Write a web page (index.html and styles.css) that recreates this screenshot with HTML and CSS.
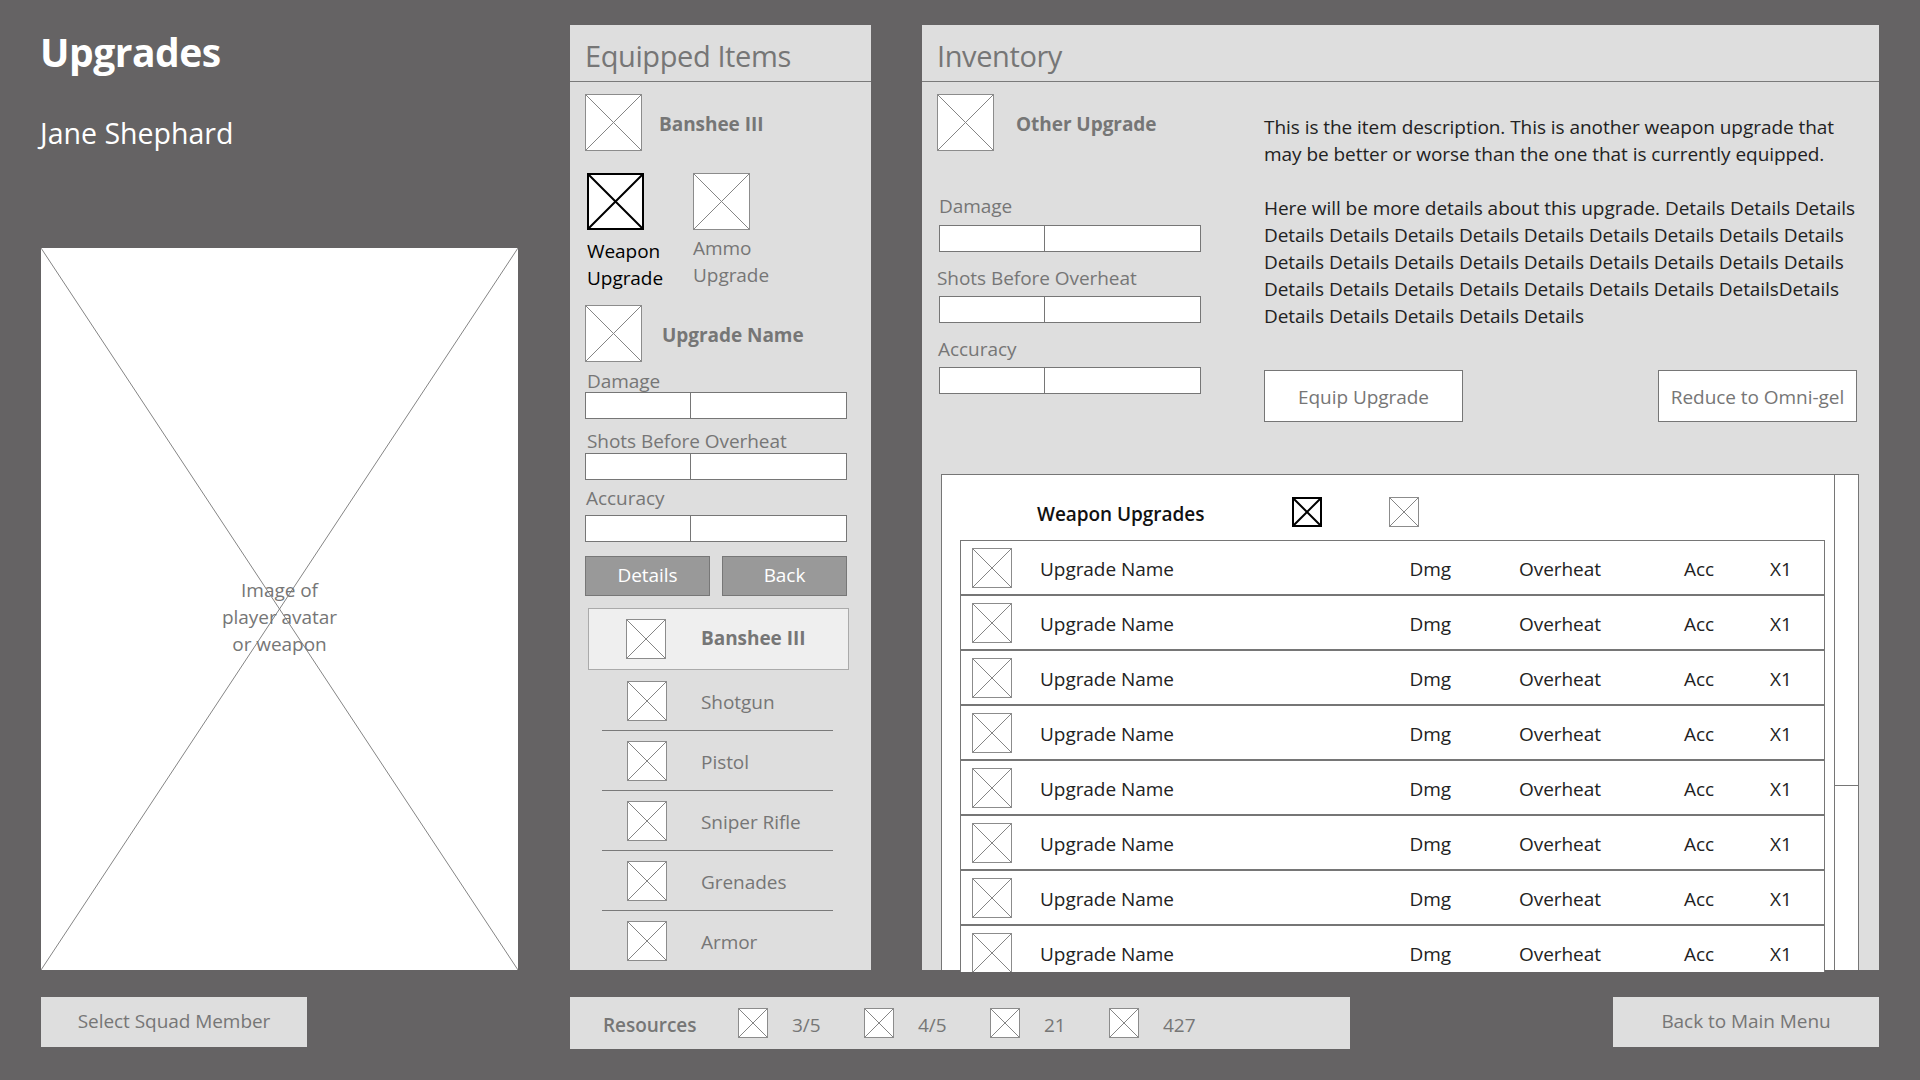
FILE: index.html
```html
<!DOCTYPE html>
<html lang="en">
<head>
    <meta charset="UTF-8">
    <title>Upgrades</title>
    <link rel="stylesheet" href="styles.css">
</head>
<body>

<svg class="defs" width="0" height="0">
    <symbol id="cross" viewBox="0 0 100 100" preserveAspectRatio="none">
        <path d="M0 0L100 100M100 0L0 100"/>
    </symbol>
</svg>

<div class="page">
    <div class="main">
        <section class="player">
            <h1 class="title">Upgrades</h1>
            <p class="player-name">Jane Shephard</p>
            <div class="avatar">
                <svg class="avatar-cross"><use href="#cross"/></svg>
                <p class="avatar-text">Image of<br>player avatar<br>or weapon</p>
            </div>
        </section>

        <section class="panel equipped">
            <h2 class="panel-title">Equipped Items</h2>
            <div class="item-head head-first">
                <svg class="ph ph-large"><use href="#cross"/></svg>
                <span class="item-name name-banshee">Banshee III</span>
            </div>
            <div class="tabs">
                <div class="tab tab-active">
                    <svg class="ph ph-large"><use href="#cross"/></svg>
                    <p>Weapon<br>Upgrade</p>
                </div>
                <div class="tab">
                    <svg class="ph ph-large"><use href="#cross"/></svg>
                    <p>Ammo<br>Upgrade</p>
                </div>
            </div>
            <div class="item-head head-second">
                <svg class="ph ph-large"><use href="#cross"/></svg>
                <span class="item-name name-upgrade">Upgrade Name</span>
            </div>
            <div class="stat stat-damage">
                <div class="stat-label">Damage</div>
                <div class="stat-bar"><span></span></div>
            </div>
            <div class="stat stat-shots">
                <div class="stat-label">Shots Before Overheat</div>
                <div class="stat-bar"><span></span></div>
            </div>
            <div class="stat stat-accuracy">
                <div class="stat-label">Accuracy</div>
                <div class="stat-bar"><span></span></div>
            </div>
            <div class="actions">
                <button class="btn-dark">Details</button>
                <button class="btn-dark">Back</button>
            </div>
            <div class="selected-weapon">
                <svg class="ph ph-row"><use href="#cross"/></svg>
                <strong>Banshee III</strong>
            </div>
            <ul class="weapons">
                <li><svg class="ph ph-row"><use href="#cross"/></svg><span>Shotgun</span></li>
                <li><svg class="ph ph-row"><use href="#cross"/></svg><span>Pistol</span></li>
                <li><svg class="ph ph-row"><use href="#cross"/></svg><span>Sniper Rifle</span></li>
                <li><svg class="ph ph-row"><use href="#cross"/></svg><span>Grenades</span></li>
                <li><svg class="ph ph-row"><use href="#cross"/></svg><span>Armor</span></li>
            </ul>
        </section>

        <section class="panel inventory">
            <h2 class="panel-title">Inventory</h2>
            <div class="inventory-top">
                <div class="inventory-stats">
                    <div class="item-head head-first">
                        <svg class="ph ph-large"><use href="#cross"/></svg>
                        <span class="item-name name-other">Other Upgrade</span>
                    </div>
                    <div class="stat stat-inv stat-inv-first">
                        <div class="stat-label">Damage</div>
                        <div class="stat-bar"><span></span></div>
                    </div>
                    <div class="stat stat-inv stat-shots-inv">
                        <div class="stat-label">Shots Before Overheat</div>
                        <div class="stat-bar"><span></span></div>
                    </div>
                    <div class="stat stat-inv stat-accuracy-inv">
                        <div class="stat-label">Accuracy</div>
                        <div class="stat-bar"><span></span></div>
                    </div>
                </div>
                <div class="description">
                    <p>This is the item description. This is another weapon upgrade that<br>may be better or worse than the one that is currently equipped.</p>
                    <p>Here will be more details about this upgrade. Details Details Details<br>Details Details Details Details Details Details Details Details Details<br>Details Details Details Details Details Details Details Details Details<br>Details Details Details Details Details Details Details DetailsDetails<br>Details Details Details Details Details</p>
                    <div class="description-actions">
                        <button class="btn-light">Equip Upgrade</button>
                        <button class="btn-light">Reduce to Omni-gel</button>
                    </div>
                </div>
            </div>

            <div class="list-box">
                <div class="list-main">
                    <div class="list-head">
                        <span class="list-title">Weapon Upgrades</span>
                        <svg class="ph ph-small ph-black"><use href="#cross"/></svg>
                        <svg class="ph ph-small"><use href="#cross"/></svg>
                    </div>
                    <div class="rows">
                        <div class="row"><svg class="ph ph-row"><use href="#cross"/></svg><span>Upgrade Name</span><span>Dmg</span><span>Overheat</span><span>Acc</span><span>X1</span></div>
                        <div class="row"><svg class="ph ph-row"><use href="#cross"/></svg><span>Upgrade Name</span><span>Dmg</span><span>Overheat</span><span>Acc</span><span>X1</span></div>
                        <div class="row"><svg class="ph ph-row"><use href="#cross"/></svg><span>Upgrade Name</span><span>Dmg</span><span>Overheat</span><span>Acc</span><span>X1</span></div>
                        <div class="row"><svg class="ph ph-row"><use href="#cross"/></svg><span>Upgrade Name</span><span>Dmg</span><span>Overheat</span><span>Acc</span><span>X1</span></div>
                        <div class="row"><svg class="ph ph-row"><use href="#cross"/></svg><span>Upgrade Name</span><span>Dmg</span><span>Overheat</span><span>Acc</span><span>X1</span></div>
                        <div class="row"><svg class="ph ph-row"><use href="#cross"/></svg><span>Upgrade Name</span><span>Dmg</span><span>Overheat</span><span>Acc</span><span>X1</span></div>
                        <div class="row"><svg class="ph ph-row"><use href="#cross"/></svg><span>Upgrade Name</span><span>Dmg</span><span>Overheat</span><span>Acc</span><span>X1</span></div>
                        <div class="row"><svg class="ph ph-row"><use href="#cross"/></svg><span>Upgrade Name</span><span>Dmg</span><span>Overheat</span><span>Acc</span><span>X1</span></div>
                    </div>
                </div>
                <div class="scrollbar"><div class="scroll-thumb"></div></div>
            </div>
        </section>
    </div>

    <div class="bottom">
        <button class="btn-bar btn-squad">Select Squad Member</button>
        <div class="resources">
            <strong class="resources-label">Resources</strong>
            <svg class="ph ph-small"><use href="#cross"/></svg><span class="res-value">3/5</span>
            <svg class="ph ph-small"><use href="#cross"/></svg><span class="res-value">4/5</span>
            <svg class="ph ph-small"><use href="#cross"/></svg><span class="res-value res-value-short">21</span>
            <svg class="ph ph-small"><use href="#cross"/></svg><span class="res-value">427</span>
        </div>
        <button class="btn-bar btn-menu">Back to Main Menu</button>
    </div>
</div>

</body>
</html>
```

FILE: styles.css
```css
* {
    box-sizing: border-box;
}
body {
    margin: 0;
    width: 1920px;
    height: 1080px;
    overflow: hidden;
    background-color: #656364;
    font-family: "Open Sans", "Noto Sans", sans-serif;
    font-size: 19px;
    letter-spacing: -0.05px;
    color: #767676;
}
h1, h2, p, ul {
    margin: 0;
    padding: 0;
}
button {
    font: inherit;
    letter-spacing: inherit;
    color: inherit;
    padding: 0;
    cursor: pointer;
}
.defs {
    position: absolute;
}

.page {
    padding: 25px 41px 0;
}
.main {
    display: flex;
    height: 945px;
}

/* placeholder images */
symbol path {
    fill: none;
    vector-effect: non-scaling-stroke;
}
.ph {
    display: block;
    flex: none;
    background-color: #fff;
    border: 1px solid #8c8c8c;
    stroke: #858585;
    stroke-width: 1px;
}
.ph-large {
    width: 57px;
    height: 57px;
}
.ph-row {
    width: 40px;
    height: 40px;
}
.ph-small {
    width: 30px;
    height: 30px;
}
.ph-black, .tab-active .ph {
    border: 2px solid #000;
    stroke: #000;
    stroke-width: 2px;
}

/* left column */
.player {
    width: 477px;
    margin-right: 52px;
    flex: none;
}
.title {
    margin: 2px 0 0 -1px;
    font-size: 39px;
    line-height: 50px;
    font-weight: 700;
    letter-spacing: -0.5px;
    color: #fff;
}
.player-name {
    margin: 37px 0 0 -1px;
    font-size: 28.5px;
    line-height: 38px;
    letter-spacing: 0;
    color: #fff;
}
.avatar {
    position: relative;
    height: 722px;
    margin-top: 96px;
    padding-top: 329px;
    background-color: #fff;
    text-align: center;
}
.avatar-cross {
    position: absolute;
    top: 0;
    left: 0;
    width: 100%;
    height: 100%;
    stroke: #858585;
    stroke-width: 1px;
}
.avatar-text {
    position: relative;
    line-height: 27px;
}

/* panels */
.panel {
    flex: none;
    height: 945px;
    background-color: #dedede;
}
.panel-title {
    height: 57px;
    padding: 11px 0 0 15px;
    border-bottom: 1px solid #7a7a7a;
    font-size: 29px;
    line-height: 40px;
    font-weight: 400;
    letter-spacing: -0.4px;
}
.equipped {
    width: 301px;
    margin-right: 51px;
}
.inventory {
    width: 957px;
}
.item-head {
    display: flex;
    align-items: center;
    margin-left: 15px;
}
.head-first {
    margin-top: 12px;
}
.head-second {
    margin-top: 13px;
}
.item-name {
    padding-top: 2px;
    font-weight: 700;
}
.name-banshee {
    margin-left: 17px;
}
.name-upgrade {
    margin-left: 20px;
}
.name-other {
    margin-left: 22px;
}

/* tabs */
.tabs {
    display: flex;
    margin: 22px 0 0 17px;
}
.tab {
    width: 106px;
    line-height: 27px;
}
.tab p {
    margin-top: 5px;
}
.tab-active {
    color: #000;
    font-weight: 500;
}
.tab-active p {
    margin-top: 8px;
}

/* stat bars */
.stat {
    margin-left: 15px;
    width: 262px;
}
.stat-label {
    height: 20px;
    line-height: 20px;
    margin-left: 2px;
    white-space: nowrap;
}
.stat-bar {
    height: 27px;
    margin-top: 1px;
    background-color: #fff;
    border: 1px solid #767676;
}
.stat-bar span {
    display: block;
    width: 105px;
    height: 100%;
    border-right: 1px solid #767676;
}
.stat-damage {
    margin-top: 9px;
}
.stat-shots {
    margin-top: 12px;
}
.stat-shots .stat-bar {
    margin-top: 2px;
}
.stat-accuracy {
    margin-top: 8px;
}
.stat-accuracy .stat-label {
    margin-left: 1px;
}
.stat-accuracy .stat-bar {
    margin-top: 7px;
}

/* equipped buttons and weapon list */
.actions {
    display: flex;
    gap: 12px;
    margin: 14px 0 0 15px;
}
.btn-dark {
    width: 125px;
    height: 40px;
    background-color: #999;
    border: 1px solid #777;
    color: #fff;
    padding-bottom: 2px;
}
.selected-weapon {
    display: flex;
    align-items: center;
    gap: 35px;
    width: 261px;
    height: 62px;
    margin: 12px 0 0 18px;
    padding-left: 37px;
    background-color: #efefef;
    border: 1px solid #aaa;
}
.selected-weapon strong {
    padding-bottom: 2px;
}
.weapons {
    width: 231px;
    margin: 1px 0 0 32px;
    list-style: none;
}
.weapons li {
    display: flex;
    align-items: center;
    gap: 34px;
    height: 60px;
    padding-left: 25px;
    border-bottom: 1px solid #7a7a7a;
}
.weapons span {
    padding-top: 2px;
}
.weapons li:last-child {
    height: 59px;
    border-bottom: none;
}

/* inventory */
.inventory-top {
    display: flex;
    height: 392px;
}
.inventory-stats {
    width: 342px;
    flex: none;
}
.stat-inv {
    margin: 16px 0 0 17px;
}
.stat-inv .stat-label {
    margin: 0 0 8px;
}
.stat-inv .stat-bar {
    margin-top: 0;
}
.stat-inv-first {
    margin-top: 45px;
}
.stat-inv-first .stat-label {
    margin-bottom: 9px;
}
.stat-shots-inv .stat-label {
    margin-left: -2px;
}
.stat-accuracy-inv .stat-label {
    margin-left: -1px;
}
.description {
    width: 593px;
    padding-top: 32px;
    line-height: 27px;
    color: #222;
}
.description p {
    margin-bottom: 27px;
    white-space: nowrap;
}
.description-actions {
    display: flex;
    justify-content: space-between;
    margin-top: 40px;
}
.btn-light {
    width: 199px;
    height: 52px;
    background-color: #fff;
    border: 1px solid #767676;
    color: #767676;
    padding-top: 3px;
}

/* weapon list */
.list-box {
    display: flex;
    width: 918px;
    height: 496px;
    margin-left: 19px;
    background-color: #fff;
    border: 1px solid #767676;
    border-bottom: none;
}
.list-main {
    width: 892px;
    padding-left: 18px;
}
.list-head {
    display: flex;
    align-items: center;
    height: 65px;
    padding: 8px 0 0 77px;
}
.list-title {
    width: 255px;
    padding-top: 4px;
    font-weight: 600;
    color: #111;
}
.list-head .ph + .ph {
    margin-left: 67px;
}
.rows {
    width: 865px;
    height: 432px;
    overflow: hidden;
    background-color: #fff;
    border-top: 1px solid #767676;
}
.row {
    display: grid;
    grid-template-columns: 40px 1fr 109.5px 165px 86px 54px;
    align-items: center;
    height: 55px;
    padding-left: 11px;
    border-left: 1px solid #767676;
    border-right: 1px solid #767676;
    border-bottom: 2px solid #767676;
    color: #222;
}
.row span {
    padding-top: 2px;
}
.row span:nth-of-type(1) {
    margin-left: 28px;
}
.scrollbar {
    flex: 1;
    border-left: 1px solid #767676;
}
.scroll-thumb {
    height: 311px;
    border-bottom: 1px solid #767676;
}

/* bottom bar */
.bottom {
    display: flex;
    align-items: flex-start;
    margin-top: 27px;
}
.btn-bar {
    height: 50px;
    background-color: #dedede;
    border: none;
    padding-bottom: 2px;
}
.btn-squad {
    width: 266px;
    margin-right: 263px;
}
.btn-menu {
    width: 266px;
    margin-left: 263px;
}
.resources {
    display: flex;
    align-items: center;
    width: 780px;
    height: 52px;
    padding-left: 33px;
    background-color: #dedede;
}
.resources-label {
    width: 135px;
    font-weight: 600;
    padding-top: 3px;
}
.res-value {
    width: 96px;
    padding: 3px 0 0 24px;
}
.res-value-short {
    width: 89px;
}
```
